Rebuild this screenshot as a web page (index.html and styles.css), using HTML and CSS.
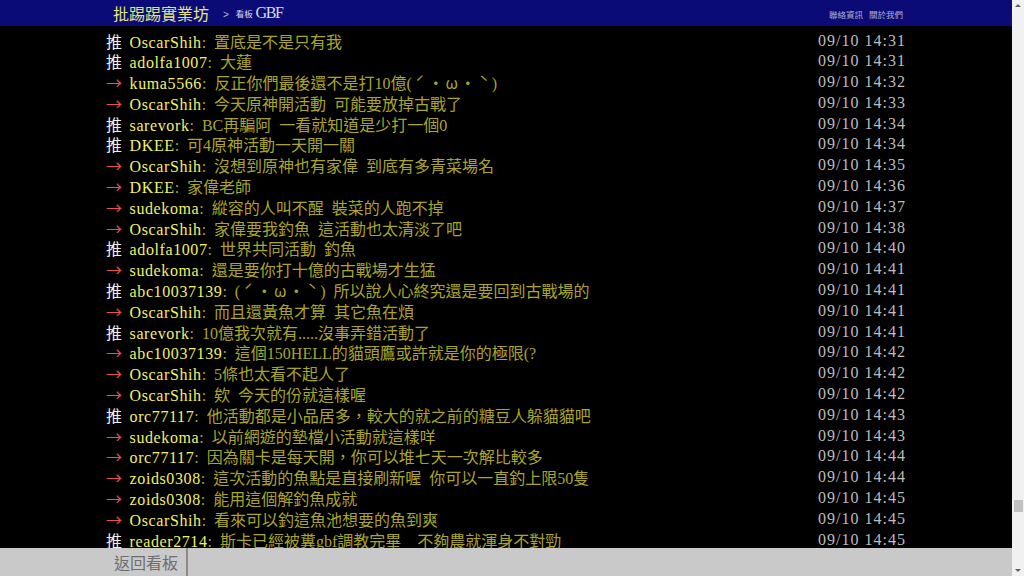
FILE: index.html
```html
<!DOCTYPE html>
<html lang="zh-Hant-TW">
  <head>
    <meta charset="UTF-8">
    <meta name="viewport" content="width=device-width, initial-scale=1.0">
    <title>[閒聊] 原神活動 - 看板 GBF - 批踢踢實業坊</title>
    <link rel="stylesheet" href="styles.css">
  </head>
  <body>
    <div id="finestra">
      <div id="pantalla">
        <div id="topbar">
          <div class="bbs-wrap topbar-inner">
            <a class="logo">批踢踢實業坊</a>
            <span class="sep">&gt;</span>
            <a class="board"><span class="board-label">看板</span> GBF</a>
            <div class="right-links">
              <a>聯絡資訊</a>
              <a>關於我們</a>
            </div>
          </div>
        </div>

        <div id="main-content">
          <div class="bbs-wrap">
            <div class="push"><span class="push-tag">推 </span><span class="push-userid">OscarShih</span><span class="push-content">: 置底是不是只有我</span><span class="push-ipdatetime">09/10 14:31</span></div>
            <div class="push"><span class="push-tag">推 </span><span class="push-userid">adolfa1007</span><span class="push-content">: 大蓮</span><span class="push-ipdatetime">09/10 14:31</span></div>
            <div class="push"><span class="push-tag f1">→ </span><span class="push-userid">kuma5566</span><span class="push-content">: 反正你們最後還不是打10億(<span class="fw">ˊ</span><span class="fw">・</span><span class="fw">ω</span><span class="fw">・</span><span class="fw">ˋ</span>)</span><span class="push-ipdatetime">09/10 14:32</span></div>
            <div class="push"><span class="push-tag f1">→ </span><span class="push-userid">OscarShih</span><span class="push-content">: 今天原神開活動 可能要放掉古戰了</span><span class="push-ipdatetime">09/10 14:33</span></div>
            <div class="push"><span class="push-tag">推 </span><span class="push-userid">sarevork</span><span class="push-content">: BC再騙阿 一看就知道是少打一個0</span><span class="push-ipdatetime">09/10 14:34</span></div>
            <div class="push"><span class="push-tag">推 </span><span class="push-userid">DKEE</span><span class="push-content">: 可4原神活動一天開一關</span><span class="push-ipdatetime">09/10 14:34</span></div>
            <div class="push"><span class="push-tag f1">→ </span><span class="push-userid">OscarShih</span><span class="push-content">: 沒想到原神也有家偉 到底有多青菜場名</span><span class="push-ipdatetime">09/10 14:35</span></div>
            <div class="push"><span class="push-tag f1">→ </span><span class="push-userid">DKEE</span><span class="push-content">: 家偉老師</span><span class="push-ipdatetime">09/10 14:36</span></div>
            <div class="push"><span class="push-tag f1">→ </span><span class="push-userid">sudekoma</span><span class="push-content">: 縱容的人叫不醒 裝菜的人跑不掉</span><span class="push-ipdatetime">09/10 14:37</span></div>
            <div class="push"><span class="push-tag f1">→ </span><span class="push-userid">OscarShih</span><span class="push-content">: 家偉要我釣魚 這活動也太清淡了吧</span><span class="push-ipdatetime">09/10 14:38</span></div>
            <div class="push"><span class="push-tag">推 </span><span class="push-userid">adolfa1007</span><span class="push-content">: 世界共同活動 釣魚</span><span class="push-ipdatetime">09/10 14:40</span></div>
            <div class="push"><span class="push-tag f1">→ </span><span class="push-userid">sudekoma</span><span class="push-content">: 還是要你打十億的古戰場才生猛</span><span class="push-ipdatetime">09/10 14:41</span></div>
            <div class="push"><span class="push-tag">推 </span><span class="push-userid">abc10037139</span><span class="push-content">: (<span class="fw">ˊ</span><span class="fw">・</span><span class="fw">ω</span><span class="fw">・</span><span class="fw">ˋ</span>) 所以說人心終究還是要回到古戰場的</span><span class="push-ipdatetime">09/10 14:41</span></div>
            <div class="push"><span class="push-tag f1">→ </span><span class="push-userid">OscarShih</span><span class="push-content">: 而且還黃魚才算 其它魚在煩</span><span class="push-ipdatetime">09/10 14:41</span></div>
            <div class="push"><span class="push-tag">推 </span><span class="push-userid">sarevork</span><span class="push-content">: 10億我次就有.....沒事弄錯活動了</span><span class="push-ipdatetime">09/10 14:41</span></div>
            <div class="push"><span class="push-tag f1">→ </span><span class="push-userid">abc10037139</span><span class="push-content">: 這個150HELL的貓頭鷹或許就是你的極限(?</span><span class="push-ipdatetime">09/10 14:42</span></div>
            <div class="push"><span class="push-tag f1">→ </span><span class="push-userid">OscarShih</span><span class="push-content">: 5條也太看不起人了</span><span class="push-ipdatetime">09/10 14:42</span></div>
            <div class="push"><span class="push-tag f1">→ </span><span class="push-userid">OscarShih</span><span class="push-content">: 欸 今天的份就這樣喔</span><span class="push-ipdatetime">09/10 14:42</span></div>
            <div class="push"><span class="push-tag">推 </span><span class="push-userid">orc77117</span><span class="push-content">: 他活動都是小品居多，較大的就之前的糖豆人躲貓貓吧</span><span class="push-ipdatetime">09/10 14:43</span></div>
            <div class="push"><span class="push-tag f1">→ </span><span class="push-userid">sudekoma</span><span class="push-content">: 以前網遊的墊檔小活動就這樣咩</span><span class="push-ipdatetime">09/10 14:43</span></div>
            <div class="push"><span class="push-tag f1">→ </span><span class="push-userid">orc77117</span><span class="push-content">: 因為關卡是每天開，你可以堆七天一次解比較多</span><span class="push-ipdatetime">09/10 14:44</span></div>
            <div class="push"><span class="push-tag f1">→ </span><span class="push-userid">zoids0308</span><span class="push-content">: 這次活動的魚點是直接刷新喔 你可以一直釣上限50隻</span><span class="push-ipdatetime">09/10 14:44</span></div>
            <div class="push"><span class="push-tag f1">→ </span><span class="push-userid">zoids0308</span><span class="push-content">: 能用這個解釣魚成就</span><span class="push-ipdatetime">09/10 14:45</span></div>
            <div class="push"><span class="push-tag f1">→ </span><span class="push-userid">OscarShih</span><span class="push-content">: 看來可以釣這魚池想要的魚到爽</span><span class="push-ipdatetime">09/10 14:45</span></div>
            <div class="push"><span class="push-tag">推 </span><span class="push-userid">reader2714</span><span class="push-content">: 斯卡已經被糞gbf調教完畢　不夠農就渾身不對勁</span><span class="push-ipdatetime">09/10 14:45</span></div>
          </div>
        </div>

        <div id="navigation">
          <div class="bbs-wrap nav-inner">
            <a class="btn-back">返回看板</a>
          </div>
        </div>
      </div>

      <!-- barra de desplaçament dibuixada -->
      <div id="scrollbar">
        <span class="arrow up"></span>
        <div class="track"><span class="thumb"></span></div>
        <span class="arrow down"></span>
      </div>
    </div>
  </body>
</html>
```

FILE: styles.css
```css
  html, body {
    margin: 0;
    padding: 0;
    height: 100%;
    background: black;
  }

  #finestra{
    display: flex;
    width: 1024px;
    height: 576px;
    overflow: hidden;
  }

  #pantalla{
    flex: 1;
    display: flex;
    flex-direction: column;
    background-color: black;
    min-width: 0;
  }

  .bbs-wrap{
    width: 800px;
    margin: 0 auto;
  }

/* --------------- Barra de dalt ----------------- */

  #topbar{
    height: 26px;
    background-color: #0b0b77;
    flex-shrink: 0;
  }

  .topbar-inner{
    display: flex;
    align-items: center;
    height: 26px;
    padding: 0 3px 0 7px;
    box-sizing: border-box;
  }

  .logo{
    font-family: "Noto Sans CJK TC", sans-serif;
    font-size: 16px;
    color: #e6e67a;
    line-height: 26px;
  }

  .sep{
    font-family: "Liberation Sans", sans-serif;
    font-size: 10px;
    color: #b8b8d0;
    margin: 2px 7px 0 14px;
  }

  .board{
    font-family: "Liberation Serif", serif;
    font-size: 16px;
    color: #d8d8ec;
    letter-spacing: -1.4px;
  }

  .board-label{
    font-family: "Noto Sans CJK TC", sans-serif;
    font-size: 8.5px;
    letter-spacing: 0;
    vertical-align: 1px;
  }

  .right-links{
    margin-left: auto;
    display: flex;
    gap: 6px;
    font-family: "Noto Sans CJK TC", sans-serif;
    font-size: 8.5px;
    color: #b0b0cc;
    margin-top: 1px;
  }

/* --------------- Empentes ----------------- */

  #main-content{
    flex: 1;
    overflow: hidden;
    padding-top: 4.5px;
    font-family: "Liberation Serif", "Noto Sans CJK TC", serif;
    font-size: 16px;
    line-height: 20.8px;
    word-spacing: 4px;
  }

  .push{
    white-space: pre;
    height: 20.8px;
  }

  .push-tag{
    font-family: "Noto Sans CJK TC", sans-serif;
    color: #f2f2f2;
  }

  .push-tag.f1{
    color: #e85050;
  }

  .push-userid{
    color: #f2f262;
    letter-spacing: 0.6px;
  }

  .push-content{
    color: #aaa526;
  }

  /* caràcters d'amplada completa */
  .fw{
    display: inline-block;
    width: 16px;
    text-align: center;
    font-family: "Noto Sans CJK TC", sans-serif;
  }

  .push-ipdatetime{
    float: right;
    color: #bdbdbd;
    letter-spacing: 1px;
    word-spacing: 0;
  }

/* --------------- Barra de baix ----------------- */

  #navigation{
    height: 28px;
    flex-shrink: 0;
    background-color: #c9c9c9;
  }

  .nav-inner{
    display: flex;
    height: 28px;
  }

  .btn-back{
    display: block;
    width: 64px;
    padding: 0 8px;
    border-right: 2px solid #8a8a8a;
    font-family: "Noto Sans CJK TC", sans-serif;
    font-size: 16px;
    line-height: 28px;
    color: #6e6e6e;
  }

/* --------------- Scrollbar ----------------- */

  #scrollbar{
    width: 12px;
    flex-shrink: 0;
    background: #f1f1f1;
    display: flex;
    flex-direction: column;
  }

  .arrow{
    display: block;
    height: 12px;
    position: relative;
  }

  .arrow:before{
    content: " ";
    position: absolute;
    left: 3px;
    width: 0;
    height: 0;
    border-left: 3px solid transparent;
    border-right: 3px solid transparent;
  }

  .arrow.up:before{
    top: 4px;
    border-bottom: 3px solid #606060;
  }

  .arrow.down:before{
    top: 5px;
    border-top: 3px solid #606060;
  }

  .track{
    flex: 1;
    padding-top: 488px;
  }

  .thumb{
    display: block;
    height: 12px;
    margin: 0 1px 0 2px;
    background: #c1c1c1;
  }
```
